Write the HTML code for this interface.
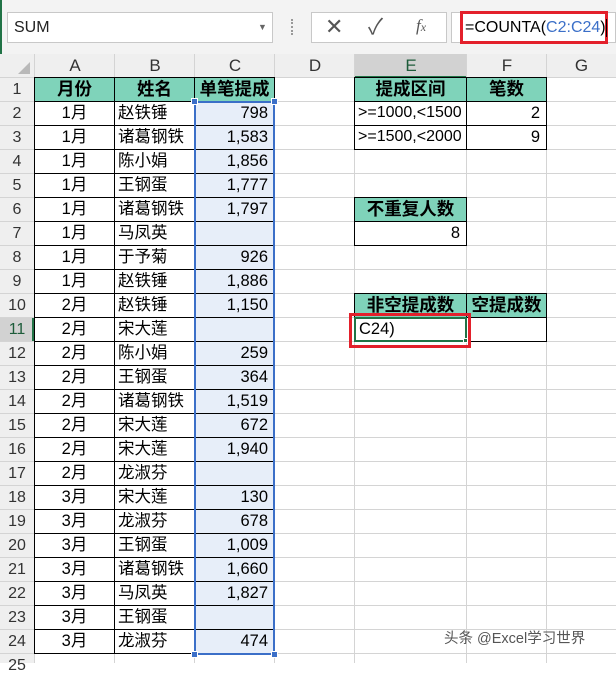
<!DOCTYPE html>
<html><head><meta charset="utf-8"><style>
*{margin:0;padding:0;box-sizing:border-box}
body{width:616px;height:663px;overflow:hidden;background:#fff;position:relative;font-family:"Liberation Sans","Noto Sans CJK SC",sans-serif;font-size:16.5px;color:#000}
div{position:absolute}
.h{height:1px;left:0;width:616px;background:#d4d4d4}
.v{width:1px;top:54px;height:609px;background:#d4d4d4}
.c{border:1px solid #000;height:25px;line-height:22px;white-space:nowrap;overflow:hidden}
.g{background:#7fd3ba;font-weight:bold;text-align:center;font-size:17.5px}
.ch{top:54px;height:24px;line-height:24px;text-align:center;color:#333;font-size:17px}
.rh{left:0;width:34px;height:24px;line-height:24px;text-align:center;color:#333;font-size:16px}
.r{text-align:right;padding-right:6px}
.l{padding-left:3px}
.m{text-align:center}
</style></head><body>
<div style="left:0;top:0;width:616px;height:54px;background:#f3f3f3"></div>
<div style="left:0;top:0;width:2px;height:663px;background:#217346"></div>
<div style="left:7px;top:12px;width:266px;height:31px;background:#fff;border:1px solid #c8c8c8;line-height:29px;padding-left:6px;color:#222;font-size:16px">SUM<span style="position:absolute;left:250px;top:0;font-size:9px;color:#666">▼</span></div>
<div style="left:291px;top:19px;width:2px;height:16px;border-left:2px dotted #999"></div>
<div style="left:311px;top:12px;width:136px;height:31px;background:#fff;border:1px solid #c8c8c8"></div>
<div style="left:325px;top:14px;font-size:22px;color:#555;line-height:26px">✕</div>
<div style="left:368px;top:14px;font-size:22px;color:#555;line-height:26px">✓</div>
<div style="left:416px;top:16px;font-size:17px;color:#555;font-style:italic;font-family:'Liberation Serif',serif">f<span style="font-size:12px">x</span></div>
<div style="left:451px;top:12px;width:165px;height:31px;background:#fff;border:1px solid #c8c8c8"></div>
<div style="left:460px;top:11px;width:148px;height:33px;border:3px solid #e3202b"></div>
<div style="left:465px;top:16px;line-height:24px;font-size:16px">=COUNTA(<span style="color:#3b6fc8">C2:C24</span>)<span style="display:inline-block;width:1px;height:18px;background:#000;vertical-align:middle"></span></div>
<div style="left:0;top:54px;width:616px;height:24px;background:#efefef"></div>
<div style="left:0;top:54px;width:34px;height:609px;background:#efefef"></div>
<div style="left:354px;top:54px;width:112px;height:24px;background:#d2d2d2;border-bottom:2px solid #217346"></div>
<div style="left:0;top:318px;width:34px;height:24px;background:#d2d2d2;border-right:2px solid #217346"></div>
<div style="left:18px;top:62px;width:0;height:0;border-left:12px solid transparent;border-bottom:12px solid #b9b9b9"></div>
<div class="ch" style="left:35px;width:80px">A</div>
<div class="ch" style="left:115px;width:80px">B</div>
<div class="ch" style="left:195px;width:80px">C</div>
<div class="ch" style="left:275px;width:80px">D</div>
<div class="ch" style="left:355px;width:112px;color:#1d5c3a">E</div>
<div class="ch" style="left:467px;width:80px">F</div>
<div class="ch" style="left:547px;width:69px">G</div>
<div style="left:195px;top:102px;width:80px;height:552px;background:#e7eef9"></div>
<div class="h" style="top:77px"></div><div class="h" style="top:101px"></div><div class="h" style="top:125px"></div><div class="h" style="top:149px"></div><div class="h" style="top:173px"></div><div class="h" style="top:197px"></div><div class="h" style="top:221px"></div><div class="h" style="top:245px"></div><div class="h" style="top:269px"></div><div class="h" style="top:293px"></div><div class="h" style="top:317px"></div><div class="h" style="top:341px"></div><div class="h" style="top:365px"></div><div class="h" style="top:389px"></div><div class="h" style="top:413px"></div><div class="h" style="top:437px"></div><div class="h" style="top:461px"></div><div class="h" style="top:485px"></div><div class="h" style="top:509px"></div><div class="h" style="top:533px"></div><div class="h" style="top:557px"></div><div class="h" style="top:581px"></div><div class="h" style="top:605px"></div><div class="h" style="top:629px"></div><div class="h" style="top:653px"></div>
<div class="v" style="left:34px"></div><div class="v" style="left:114px"></div><div class="v" style="left:194px"></div><div class="v" style="left:274px"></div><div class="v" style="left:354px"></div><div class="v" style="left:466px"></div><div class="v" style="left:546px"></div>
<div class="rh" style="top:78px">1</div><div class="rh" style="top:102px">2</div><div class="rh" style="top:126px">3</div><div class="rh" style="top:150px">4</div><div class="rh" style="top:174px">5</div><div class="rh" style="top:198px">6</div><div class="rh" style="top:222px">7</div><div class="rh" style="top:246px">8</div><div class="rh" style="top:270px">9</div><div class="rh" style="top:294px">10</div><div class="rh" style="top:318px;color:#1d5c3a">11</div><div class="rh" style="top:342px">12</div><div class="rh" style="top:366px">13</div><div class="rh" style="top:390px">14</div><div class="rh" style="top:414px">15</div><div class="rh" style="top:438px">16</div><div class="rh" style="top:462px">17</div><div class="rh" style="top:486px">18</div><div class="rh" style="top:510px">19</div><div class="rh" style="top:534px">20</div><div class="rh" style="top:558px">21</div><div class="rh" style="top:582px">22</div><div class="rh" style="top:606px">23</div><div class="rh" style="top:630px">24</div><div class="rh" style="top:654px">25</div>
<div class="c g" style="left:34px;top:77px;width:81px">月份</div><div class="c g" style="left:114px;top:77px;width:81px">姓名</div><div class="c g" style="left:194px;top:77px;width:81px">单笔提成</div>
<div class="c m" style="left:34px;top:101px;width:81px">1月</div><div class="c l" style="left:114px;top:101px;width:81px">赵铁锤</div><div class="c r" style="left:194px;top:101px;width:81px">798</div>
<div class="c m" style="left:34px;top:125px;width:81px">1月</div><div class="c l" style="left:114px;top:125px;width:81px">诸葛钢铁</div><div class="c r" style="left:194px;top:125px;width:81px">1,583</div>
<div class="c m" style="left:34px;top:149px;width:81px">1月</div><div class="c l" style="left:114px;top:149px;width:81px">陈小娟</div><div class="c r" style="left:194px;top:149px;width:81px">1,856</div>
<div class="c m" style="left:34px;top:173px;width:81px">1月</div><div class="c l" style="left:114px;top:173px;width:81px">王钢蛋</div><div class="c r" style="left:194px;top:173px;width:81px">1,777</div>
<div class="c m" style="left:34px;top:197px;width:81px">1月</div><div class="c l" style="left:114px;top:197px;width:81px">诸葛钢铁</div><div class="c r" style="left:194px;top:197px;width:81px">1,797</div>
<div class="c m" style="left:34px;top:221px;width:81px">1月</div><div class="c l" style="left:114px;top:221px;width:81px">马凤英</div><div class="c r" style="left:194px;top:221px;width:81px"></div>
<div class="c m" style="left:34px;top:245px;width:81px">1月</div><div class="c l" style="left:114px;top:245px;width:81px">于予菊</div><div class="c r" style="left:194px;top:245px;width:81px">926</div>
<div class="c m" style="left:34px;top:269px;width:81px">1月</div><div class="c l" style="left:114px;top:269px;width:81px">赵铁锤</div><div class="c r" style="left:194px;top:269px;width:81px">1,886</div>
<div class="c m" style="left:34px;top:293px;width:81px">2月</div><div class="c l" style="left:114px;top:293px;width:81px">赵铁锤</div><div class="c r" style="left:194px;top:293px;width:81px">1,150</div>
<div class="c m" style="left:34px;top:317px;width:81px">2月</div><div class="c l" style="left:114px;top:317px;width:81px">宋大莲</div><div class="c r" style="left:194px;top:317px;width:81px"></div>
<div class="c m" style="left:34px;top:341px;width:81px">2月</div><div class="c l" style="left:114px;top:341px;width:81px">陈小娟</div><div class="c r" style="left:194px;top:341px;width:81px">259</div>
<div class="c m" style="left:34px;top:365px;width:81px">2月</div><div class="c l" style="left:114px;top:365px;width:81px">王钢蛋</div><div class="c r" style="left:194px;top:365px;width:81px">364</div>
<div class="c m" style="left:34px;top:389px;width:81px">2月</div><div class="c l" style="left:114px;top:389px;width:81px">诸葛钢铁</div><div class="c r" style="left:194px;top:389px;width:81px">1,519</div>
<div class="c m" style="left:34px;top:413px;width:81px">2月</div><div class="c l" style="left:114px;top:413px;width:81px">宋大莲</div><div class="c r" style="left:194px;top:413px;width:81px">672</div>
<div class="c m" style="left:34px;top:437px;width:81px">2月</div><div class="c l" style="left:114px;top:437px;width:81px">宋大莲</div><div class="c r" style="left:194px;top:437px;width:81px">1,940</div>
<div class="c m" style="left:34px;top:461px;width:81px">2月</div><div class="c l" style="left:114px;top:461px;width:81px">龙淑芬</div><div class="c r" style="left:194px;top:461px;width:81px"></div>
<div class="c m" style="left:34px;top:485px;width:81px">3月</div><div class="c l" style="left:114px;top:485px;width:81px">宋大莲</div><div class="c r" style="left:194px;top:485px;width:81px">130</div>
<div class="c m" style="left:34px;top:509px;width:81px">3月</div><div class="c l" style="left:114px;top:509px;width:81px">龙淑芬</div><div class="c r" style="left:194px;top:509px;width:81px">678</div>
<div class="c m" style="left:34px;top:533px;width:81px">3月</div><div class="c l" style="left:114px;top:533px;width:81px">王钢蛋</div><div class="c r" style="left:194px;top:533px;width:81px">1,009</div>
<div class="c m" style="left:34px;top:557px;width:81px">3月</div><div class="c l" style="left:114px;top:557px;width:81px">诸葛钢铁</div><div class="c r" style="left:194px;top:557px;width:81px">1,660</div>
<div class="c m" style="left:34px;top:581px;width:81px">3月</div><div class="c l" style="left:114px;top:581px;width:81px">马凤英</div><div class="c r" style="left:194px;top:581px;width:81px">1,827</div>
<div class="c m" style="left:34px;top:605px;width:81px">3月</div><div class="c l" style="left:114px;top:605px;width:81px">王钢蛋</div><div class="c r" style="left:194px;top:605px;width:81px"></div>
<div class="c m" style="left:34px;top:629px;width:81px">3月</div><div class="c l" style="left:114px;top:629px;width:81px">龙淑芬</div><div class="c r" style="left:194px;top:629px;width:81px">474</div>
<div style="left:194px;top:101px;width:81px;height:554px;border:2px solid #3b6fc8"></div>
<div style="left:191px;top:98px;width:7px;height:7px;background:#3b6fc8;border:1px solid #fff"></div>
<div style="left:271px;top:98px;width:7px;height:7px;background:#3b6fc8;border:1px solid #fff"></div>
<div style="left:191px;top:651px;width:7px;height:7px;background:#3b6fc8;border:1px solid #fff"></div>
<div style="left:271px;top:651px;width:7px;height:7px;background:#3b6fc8;border:1px solid #fff"></div>
<div class="c g" style="left:354px;top:77px;width:113px">提成区间</div><div class="c g" style="left:466px;top:77px;width:81px">笔数</div>
<div class="c l" style="left:354px;top:101px;width:113px;font-size:16px">&gt;=1000,&lt;1500</div><div class="c r" style="left:466px;top:101px;width:81px">2</div>
<div class="c l" style="left:354px;top:125px;width:113px;font-size:16px">&gt;=1500,&lt;2000</div><div class="c r" style="left:466px;top:125px;width:81px">9</div>
<div class="c g" style="left:354px;top:197px;width:113px">不重复人数</div>
<div class="c r" style="left:354px;top:221px;width:113px">8</div>
<div class="c g" style="left:354px;top:293px;width:113px">非空提成数</div><div class="c g" style="left:466px;top:293px;width:81px">空提成数</div>
<div class="c" style="left:466px;top:317px;width:81px"></div>
<div style="left:354px;top:317px;width:113px;height:25px;background:#fff;border:2px solid #217346;line-height:21px;padding-left:3px">C24)</div>
<div style="left:463px;top:338px;width:5px;height:5px;background:#217346;border:1px solid #fff"></div>
<div style="left:349px;top:313px;width:122px;height:35px;border:3px solid #e3202b"></div>
<div style="left:444px;top:631px;font-size:14.5px;color:#555;line-height:16px">头条 @Excel学习世界</div>
</body></html>
